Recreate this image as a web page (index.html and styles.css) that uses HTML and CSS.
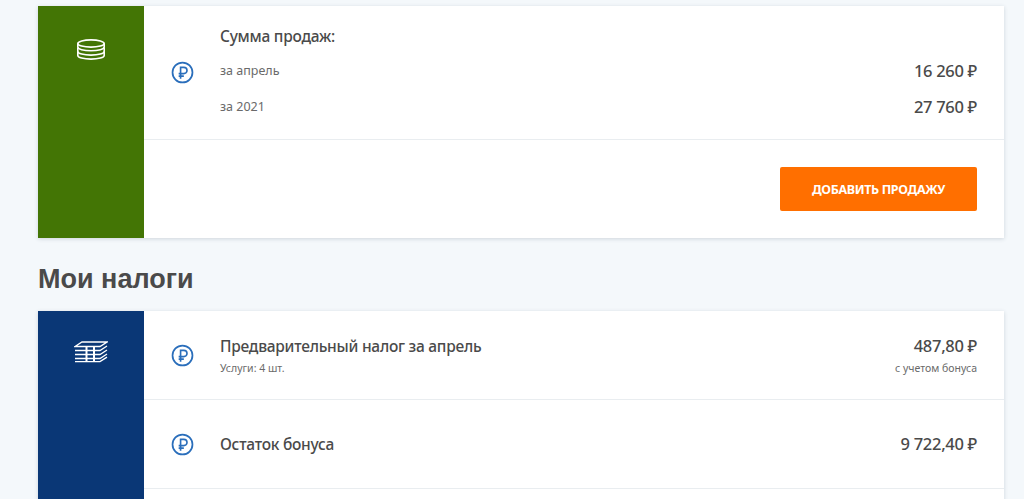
FILE: index.html
```html
<!DOCTYPE html>
<html lang="ru">
<head>
<meta charset="utf-8">
<title>Мои налоги</title>
<link rel="stylesheet" href="styles.css">
</head>
<body>
<svg class="sprite" width="0" height="0" aria-hidden="true">
  <symbol id="rub" viewBox="0 0 24 24">
    <circle cx="12" cy="12" r="10.4" fill="none" stroke="#2a6ebb" stroke-width="1.8"/>
    <path d="M10 18.5V6.6h3.4a3.3 3.3 0 0 1 0 6.6H8M8 15.8h5.4" fill="none" stroke="#2a6ebb" stroke-width="1.7"/>
  </symbol>
</svg>
<main class="page">
  <section class="card">
    <div class="side side-green">
      <svg class="side-icon coins" viewBox="0 0 30 24" fill="none" stroke="#fff" stroke-width="1.6">
        <ellipse cx="15" cy="5.5" rx="13.2" ry="3.6"/>
        <path d="M1.8 5.5v3.6c0 2 5.9 3.6 13.2 3.6s13.2-1.6 13.2-3.6V5.5"/>
        <path d="M1.8 9.5v4c0 2 5.9 3.6 13.2 3.6s13.2-1.6 13.2-3.6v-4"/>
        <path d="M1.8 13.5v4c0 2 5.9 3.6 13.2 3.6s13.2-1.6 13.2-3.6v-4"/>
      </svg>
    </div>
    <div class="content">
      <div class="row row-sales">
        <svg class="rub"><use href="#rub"/></svg>
        <div class="grow">
          <div class="title title-sales">Сумма продаж:</div>
          <div class="line line-first"><span class="sub">за апрель</span><span class="amount">16 260 ₽</span></div>
          <div class="line"><span class="sub">за 2021</span><span class="amount">27 760 ₽</span></div>
        </div>
      </div>
      <div class="actions"><button class="btn" type="button">ДОБАВИТЬ ПРОДАЖУ</button></div>
    </div>
  </section>
  <h2 class="heading">Мои налоги</h2>
  <section class="card">
    <div class="side side-blue">
      <svg class="side-icon cash" viewBox="0 0 34 22" fill="none" stroke="#fff" stroke-width="1.3">
        <path d="M1 5.5 8 1h25l-7 4.5H1Z"/>
        <path d="M1 9.5h25l7-4.5M1 13.5h25l7-4.5M1 17.5h25l7-4.5M1 20.6h25l7-4.5"/>
        <path d="M12.5 6v14.5M20 6v14.5" stroke-width="2"/>
      </svg>
    </div>
    <div class="content">
      <div class="row row-tax">
        <svg class="rub"><use href="#rub"/></svg>
        <div class="grow line">
          <div>
            <div class="title">Предварительный налог за апрель</div>
            <div class="note">Услуги: 4 шт.</div>
          </div>
          <div class="right">
            <div class="amount">487,80 ₽</div>
            <div class="note">с учетом бонуса</div>
          </div>
        </div>
      </div>
      <div class="row row-tax">
        <svg class="rub"><use href="#rub"/></svg>
        <div class="grow line">
          <div class="title">Остаток бонуса</div>
          <div class="amount">9 722,40 ₽</div>
        </div>
      </div>
      <div class="row row-tax"></div>
    </div>
  </section>
</main>
</body>
</html>
```
FILE: styles.css
```css
* { box-sizing: border-box; }
html, body { margin: 0; height: 499px; overflow: hidden; }
body {
  background: #f4f8fb;
  font-family: "Noto Sans", "Liberation Sans", sans-serif;
  color: #4a4a4a;
}
.sprite { position: absolute; }
.page { padding: 6px 20px 0 38px; }
.card {
  display: flex;
  background: #fff;
  box-shadow: 0 1px 4px rgba(60, 80, 100, .2);
}
.side { width: 106px; flex: none; display: flex; justify-content: center; align-items: flex-start; }
.side-green { background: #437505; }
.side-blue { background: #0a3776; }
.side-icon { display: block; }
.coins { width: 30px; height: 24px; margin-top: 32px; }
.cash { width: 34px; height: 22px; margin-top: 30px; }
.content { flex: 1; min-width: 0; }
.row {
  display: flex;
  align-items: center;
  gap: 26px;
  padding: 0 27px 0 27px;
  border-bottom: 1px solid #e9edf0;
}
.rub { width: 23px; height: 23px; flex: none; }
.grow { flex: 1; min-width: 0; }
.row-sales { height: 134px; }
.row-tax { height: 89px; }
.line { display: flex; justify-content: space-between; align-items: center; }
.line-first { margin-top: 13px; }
.line + .line { margin-top: 14px; }
.title { font-size: 15.5px; line-height: 22px; font-weight: 500; letter-spacing: -.25px; }
.title-sales { margin-top: -2px; }
.sub { font-size: 12.5px; line-height: 22px; color: #6a6a6a; }
.amount { font-size: 16.5px; line-height: 22px; font-weight: 500; letter-spacing: -.3px; }
.note { font-size: 10.5px; line-height: 14px; margin-top: 4px; color: #6a6a6a; }
.right { text-align: right; }
.actions { display: flex; justify-content: flex-end; padding: 27px 27px; height: 98px; }
.btn {
  width: 197px;
  height: 44px;
  border: 0;
  border-radius: 2px;
  background: #ff6f00;
  color: #fff;
  font: 700 12.5px "Noto Sans", "Liberation Sans", sans-serif;
  letter-spacing: -.35px;
}
.heading {
  margin: 0;
  height: 73px;
  padding-top: 24px;
  font-family: "Liberation Sans Narrow", "Liberation Sans", sans-serif;
  font-size: 27px;
  line-height: 34px;
  font-weight: 700;
  color: #4a4a4a;
}
```
